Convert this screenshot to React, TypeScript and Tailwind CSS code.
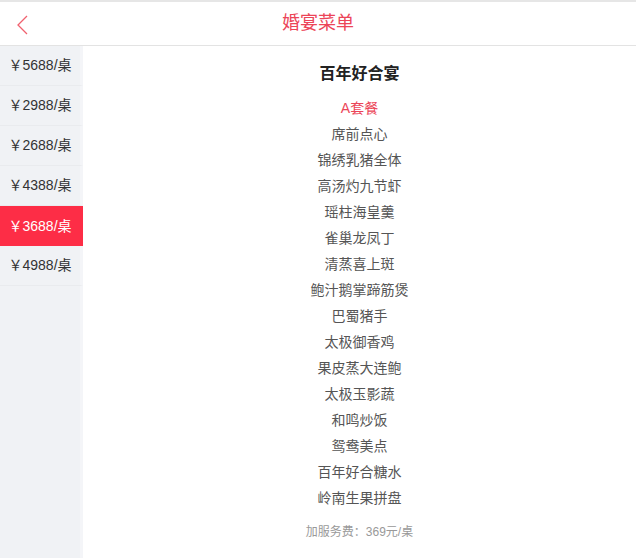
import React, { useState } from 'react';

const prices = ['5688', '2988', '2688', '4388', '3688', '4988'];

const dishes = [
  '席前点心',
  '锦绣乳猪全体',
  '高汤灼九节虾',
  '瑶柱海皇羹',
  '雀巢龙凤丁',
  '清蒸喜上斑',
  '鲍汁鹅掌蹄筋煲',
  '巴蜀猪手',
  '太极御香鸡',
  '果皮蒸大连鲍',
  '太极玉影蔬',
  '和鸣炒饭',
  '鸳鸯美点',
  '百年好合糖水',
  '岭南生果拼盘',
];

const font = "font-['Liberation_Sans','Noto_Sans_CJK_SC',sans-serif]";

export default function App() {
  const [active, setActive] = useState(4);

  return (
    <div className={`${font} w-[636px] h-[558px] flex flex-col bg-white border-t-2 border-[#e6e6e6]`}>
      <header className="h-[44px] flex items-center relative border-b border-[#e3e3e3]">
        <button className="absolute left-[12px] top-[11px] w-[20px] h-[24px] flex items-center justify-center">
          <svg width="12" height="20" viewBox="0 0 12 20" fill="none">
            <path d="M11 1L2 10l9 9" stroke="#f0616f" strokeWidth="1.3" />
          </svg>
        </button>
        <h1 className="flex-1 text-center text-[18px] text-[#ec4558]">婚宴菜单</h1>
      </header>

      <div className="flex-1 flex min-h-0">
        <aside className="w-[83px] flex flex-col bg-[#f0f2f5]">
          {prices.map((p, i) => (
            <div
              key={p}
              onClick={() => setActive(i)}
              className={`h-[40px] flex items-center justify-center text-[14px] border-r-[3px] ${
                i === active
                  ? 'bg-[#fd2d46] text-white border-r-[#fd2d46]'
                  : 'text-[#333] border-b border-b-[#e9ebee] border-r-[#f4f5f8]'
              }`}
            >
              ￥{p}/桌
            </div>
          ))}
          <div className="flex-1 border-r-[3px] border-[#f4f5f8]" />
        </aside>

        <main className="flex-1 flex flex-col items-center pt-[17px]">
          <h2 className="text-[16px] font-bold text-[#222] leading-[22px]">百年好合宴</h2>
          <ul className="mt-[10px] flex flex-col items-center text-[14px] leading-[26px] text-[#555]">
            <li className="text-[#ec4558]">A套餐</li>
            {dishes.map(d => (
              <li key={d}>{d}</li>
            ))}
          </ul>
          <p className="mt-[12px] text-[12px] text-[#999]">加服务费：369元/桌</p>
        </main>
      </div>
    </div>
  );
}
